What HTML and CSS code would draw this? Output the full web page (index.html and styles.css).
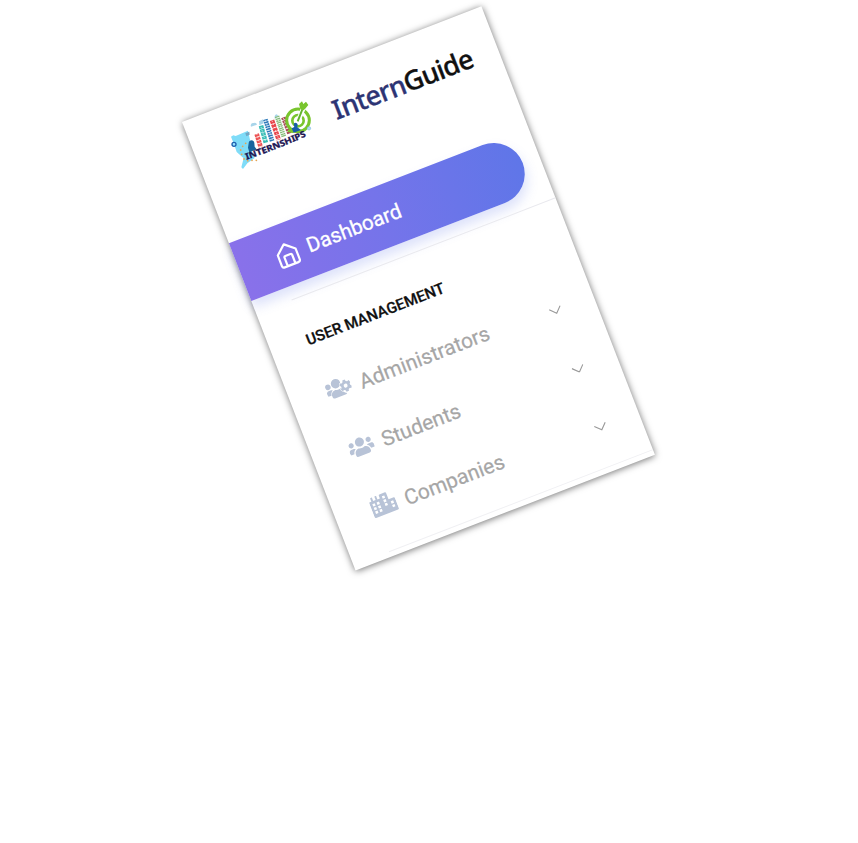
FILE: index.html
```html
<!DOCTYPE html>
<html lang="en">
<head>
<meta charset="utf-8">
<title>InternGuide</title>
<link rel="stylesheet" href="styles.css">
</head>
<body>
<aside class="sidebar">
  <header class="brand">
    <svg class="brand-logo" viewBox="36 16 92 54">
      <g transform="rotate(21.15) translate(-182 -122) translate(220 90) scale(.33333)">
        <path fill="#7fdcf8" d="M33 140 40 136 47 138 84 122 92 158 98 192 104 204 82 220 69 237 64 232 71 205 50 186 43 165Z"/>
        <circle cx="42" cy="163" r="6" fill="#9be4ff" stroke="#1c5fae" stroke-width="4"/>
        <g fill="#e5a552"><circle cx="77" cy="160" r="2.7"/><circle cx="68" cy="169" r="2.7"/><circle cx="62" cy="180" r="2.7"/><circle cx="65" cy="193" r="2.7"/><circle cx="72" cy="207" r="2.7"/><circle cx="83" cy="212" r="2.7"/><circle cx="96" cy="211" r="2.7"/><circle cx="109" cy="211" r="2.7"/></g>
        <path fill="#17649d" d="M86 160c0-12 16-13 17-1l1 11 6 8-22 9-4-14z"/>
        <path fill="#a9d5ea" d="M92 106q2-9 9-7 8-3 10 5l-18 6zM117 94l12-6 2 12-13 6zM164 78q5-10 11 0l-2 5-9 3z"/>
        <path fill="#72a7c4" d="M76 130l12-5 1 9-10 5z"/>
        <g fill="none" stroke-width="14">
          <path stroke="#ed5354" stroke-dasharray="8 2" d="M110 132 122 171"/>
          <path stroke="#39bdb6" stroke-dasharray="9 2" d="M123 107 138 160"/>
          <path stroke="#2d79b9" stroke-dasharray="5 2" d="M136 88 157 155"/>
          <path stroke="#e8464c" stroke-dasharray="10 2" d="M156 91 176 149"/>
          <path stroke="#87bd79" stroke-dasharray="4 2" d="M171 79 192 141"/>
          <path stroke="#a94f59" stroke-dasharray="7 2" d="M190 82 209 132"/>
        </g>
        <g stroke="#fff" stroke-width="2" stroke-dasharray="4 6"><path d="M110 131 122 170M123 111 138 160M136 91 157 150M156 92 175 144M171 80 191 135M190 84 208 128"/></g>
        <path fill="#79c52e" d="M202 125 214 107 245 101 246 118 218 129Z"/>
        <circle cx="234" cy="91" r="34" fill="#fff" stroke="#79c52e" stroke-width="9"/>
        <circle cx="234" cy="92" r="17" fill="#fff" stroke="#79c52e" stroke-width="8"/>
        <path stroke="#fff" stroke-width="14" d="M236 88 251 53"/>
        <path stroke="#62b52d" stroke-width="6" d="M233 94 251 48"/>
        <path fill="#79c52e" d="M240 53 237 42 246 34 250 42 258 35 265 45 255 57 248 62Z"/>
        <path fill="#185ca8" d="M221 101q8-6 12 2l-1 9 11 8-22 8-6-13 8-4z"/>
        <circle cx="267" cy="115" r="5" fill="#b6def3" stroke="#84bce4" stroke-width="2"/>
        <path id="banner" fill="none" d="M80 209Q166 180 265 136"/>
        <text class="logo-word" textLength="193" lengthAdjust="spacingAndGlyphs"><textPath href="#banner" textLength="193" lengthAdjust="spacingAndGlyphs">INTERNSHIPS</textPath></text>
      </g>
    </svg>
    <div class="brand-name"><span>Intern</span>Guide</div>
  </header>
  <a class="item active">
    <svg class="icon" viewBox="0 0 28 28" fill="none" stroke="#fff" stroke-width="2.4" stroke-linejoin="round" stroke-linecap="round"><path d="M3.500 11 14 2 24.500 11V23.500Q24.500 26 22 26H6Q3.500 26 3.500 23.500ZM9.500 26V16Q9.500 14.500 11 14.500H17Q18.500 14.500 18.500 16V26"/></svg>
    <span>Dashboard</span>
  </a>
  <hr class="divider">
  <h2 class="section">USER MANAGEMENT</h2>
  <nav class="menu">
    <a class="item">
      <svg class="icon" viewBox="0 0 640 512"><circle cx="82" cy="160" r="68"/><circle cx="290" cy="144" r="116"/><path d="M165 274.600C153.500 263.100 145.600 256 128 256H64c-35.300 0-64 28.700-64 64v32c0 17.700 14.300 32 32 32h60c6.300-47.400 30-87.300 73-109.400zM226 288h-8C155 288 103 339.600 103 403.200V432c0 26.500 21.500 48 48 48h288c14 0 27-6 35-16-63-31-103-98-93-171-45 16-100 15-155-5z"/><path class="gear" d="M473 130h62l9 43 33 19 42-15 31 54-33 29v38l33 29-31 54-42-15-33 19-9 43h-62l-9-43-33-19-42 15-31-54 33-29v-38l-33-29 31-54 42 15 33-19z"/><circle class="hole" cx="504" cy="279" r="49"/></svg>
      <span>Administrators</span>
      <svg class="chevron" viewBox="0 0 14 8"><path d="M.7.7 7 7 13.300.7"/></svg>
    </a>
    <a class="item">
      <svg class="icon" viewBox="0 0 640 512"><path d="M96 224c35.300 0 64-28.700 64-64s-28.700-64-64-64-64 28.700-64 64 28.700 64 64 64zm448 0c35.300 0 64-28.700 64-64s-28.700-64-64-64-64 28.700-64 64 28.700 64 64 64zm32 32h-64c-17.600 0-33.500 7.100-45.100 18.600 40.300 22.100 68.900 62 75.100 109.400h66c17.700 0 32-14.300 32-32v-32c0-35.300-28.700-64-64-64zm-256 0c61.900 0 112-50.100 112-112S381.900 32 320 32 208 82.100 208 144s50.100 112 112 112zm76.800 32h-8.300c-20.800 10-43.900 16-68.500 16s-47.600-6-68.500-16h-8.300C179.600 288 128 339.600 128 403.200V432c0 26.500 21.500 48 48 48h288c26.500 0 48-21.500 48-48v-28.800c0-63.600-51.600-115.200-115.200-115.200zm-223.700-13.400C161.500 263.100 145.600 256 128 256H64c-35.300 0-64 28.700-64 64v32c0 17.700 14.300 32 32 32h65.900c6.300-47.400 34.900-87.300 75.200-109.400z"/></svg>
      <span>Students</span>
      <svg class="chevron" viewBox="0 0 14 8"><path d="M.7.7 7 7 13.300.7"/></svg>
    </a>
    <a class="item">
      <svg class="icon" viewBox="0 0 640 512"><path fill-rule="evenodd" d="M616 192H480V24c0-13-11-24-24-24H312c-13 0-24 11-24 24v72h-64V16c0-9-7-16-16-16h-16c-9 0-16 7-16 16v80h-64V16c0-9-7-16-16-16H80c-9 0-16 7-16 16v80H24c-13 0-24 11-24 24v360c0 18 14 32 32 32h576c18 0 32-14 32-32V216c0-13-11-24-24-24zM64 160h64v64H64zm0 96h64v64H64zm0 96h64v64H64zm112-192h64v64h-64zm0 96h64v64h-64zm0 96h64v64h-64zM352 64h64v64h-64zm0 96h64v64h-64zm0 96h64v64h-64zm160 0h64v64h-64zm0 96h64v64h-64z"/></svg>
      <span>Companies</span>
      <svg class="chevron" viewBox="0 0 14 8"><path d="M.7.7 7 7 13.300.7"/></svg>
    </a>
  </nav>
  <hr class="divider">
</aside>
</body>
</html>
```
FILE: styles.css
```css
* { box-sizing: border-box; }
body { margin: 0; background: #fff; overflow: hidden; font-family: Roboto, "Liberation Sans", sans-serif; }
.sidebar {
  width: 321px;
  height: 480.500px;
  margin: 121.700px 0 0 182.400px;
  background: #fff;
  box-shadow: 0 1px 7px rgba(0, 0, 0, .55);
  transform: rotate(-21.15deg);
  transform-origin: 0 0;
}
.brand { height: 129.700px; display: flex; align-items: flex-start; padding: 16px 0 0 36px; }
.brand-logo { width: 92px; height: 54px; margin-right: 17px; flex: none; }
.logo-word { font: bold 26px "Noto Sans", sans-serif; fill: #1c1553; stroke: #1c1553; stroke-width: 1px; }
.brand-name { font: 500 27px/36px "Noto Sans", sans-serif; letter-spacing: -.75px; color: #111; -webkit-text-stroke: .35px; margin-top: 9.800px; white-space: nowrap; }
.brand-name span { color: #2d3474; }
.item { display: flex; align-items: center; height: 62.500px; padding: 0 34px 0 36px; font-size: 21px; line-height: 26px; color: #a6a6a6; }
.icon { width: 27px; height: 27px; margin-right: 9px; fill: #b8c3d7; flex: none; }
.active {
  width: 303px;
  height: 62.500px;
  color: #fff;
  border-radius: 0 31px 31px 0;
  background: linear-gradient(to right, #8971ea, #7f72ea, #7574ea, #6a75e9, #5f76e8);
  box-shadow: 0 7px 12px rgba(95, 118, 232, .21);
}
.active .icon { fill: none; width: 25.500px; height: 25.500px; margin: 2px 8.500px 0 2px; }
.active span { font-size: 20.700px; -webkit-text-stroke: .3px; }
.gear { stroke: #fff; stroke-width: 24px; paint-order: stroke; }
.hole { fill: #fff; }
.divider { border: 0; height: 1px; margin: 13px 0 0 38px; background: #e9e9ee; }
.section { margin: 33.300px 0 15.800px 37.300px; font-size: 15.300px; line-height: 20px; font-weight: 500; color: #111; -webkit-text-stroke: .25px; }
.menu .item { -webkit-text-stroke: .2px; }
.menu .icon { width: 26px; height: 26px; margin: 0 8.700px 5px 1.300px; }
.chevron { width: 13px; height: 7.500px; margin: 9px 0 0 auto; fill: none; stroke: #999; stroke-width: 1.2; }
.menu + .divider { margin-top: 12.500px; background: #f0f0f3; }
```
